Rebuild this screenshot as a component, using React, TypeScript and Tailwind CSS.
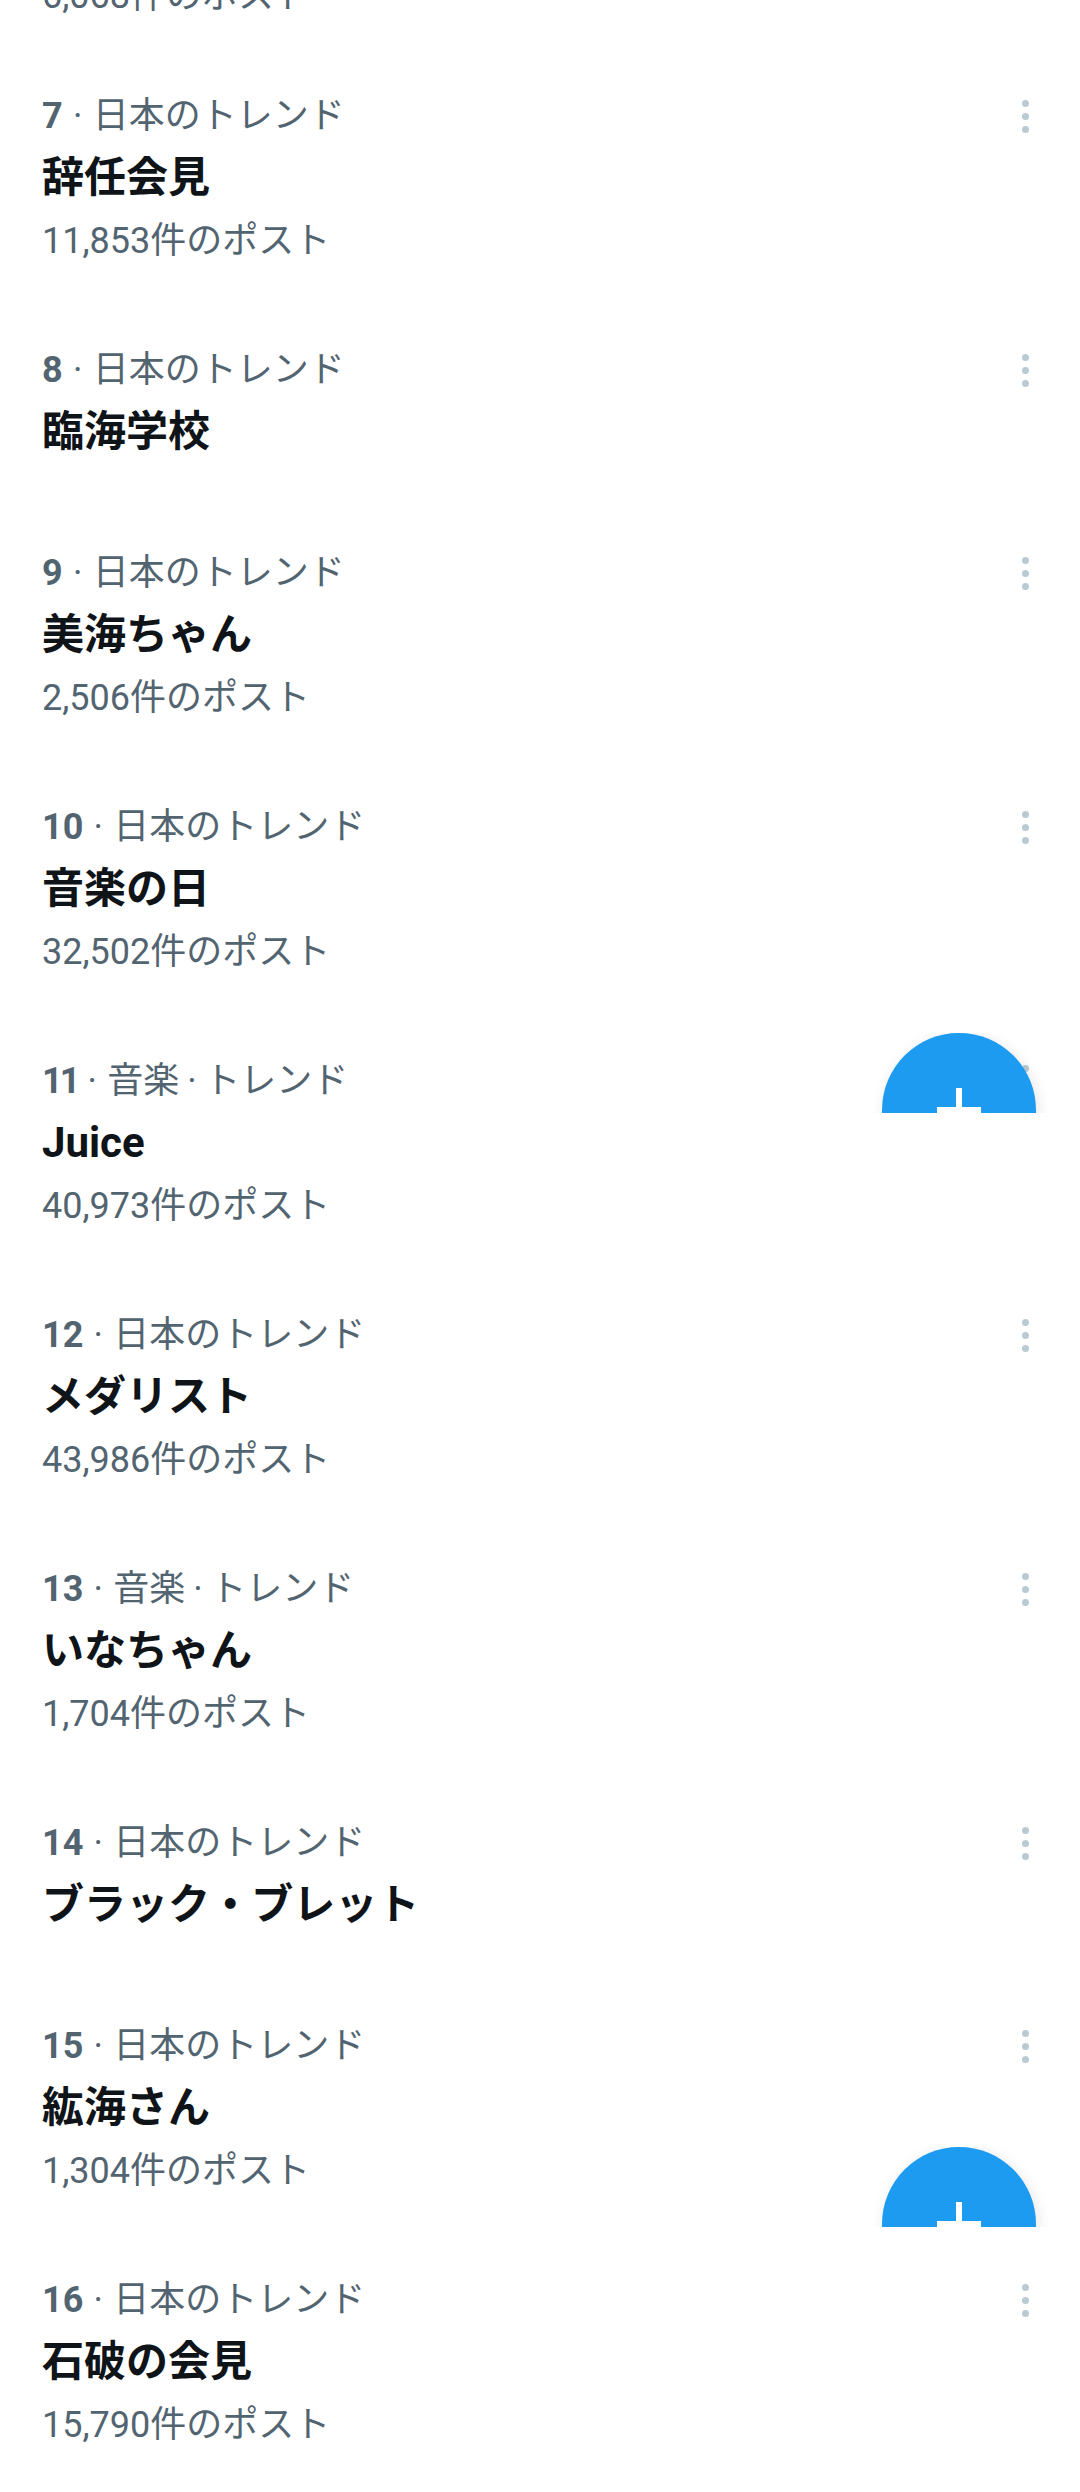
type Trend = {
  rank: number;
  category: string[];
  title: string;
  posts?: string;
};

const trends: Trend[] = [
  { rank: 7, category: ["日本のトレンド"], title: "辞任会見", posts: "11,853" },
  { rank: 8, category: ["日本のトレンド"], title: "臨海学校" },
  { rank: 9, category: ["日本のトレンド"], title: "美海ちゃん", posts: "2,506" },
  { rank: 10, category: ["日本のトレンド"], title: "音楽の日", posts: "32,502" },
  { rank: 11, category: ["音楽", "トレンド"], title: "Juice", posts: "40,973" },
  { rank: 12, category: ["日本のトレンド"], title: "メダリスト", posts: "43,986" },
  { rank: 13, category: ["音楽", "トレンド"], title: "いなちゃん", posts: "1,704" },
  { rank: 14, category: ["日本のトレンド"], title: "ブラック・ブレット" },
  { rank: 15, category: ["日本のトレンド"], title: "紘海さん", posts: "1,304" },
  { rank: 16, category: ["日本のトレンド"], title: "石破の会見", posts: "15,790" },
];

const font = { fontFamily: 'Roboto, "Noto Sans CJK JP", sans-serif' };

const MoreDots = () => (
  <div className="h-[48px] flex flex-col items-center justify-center gap-[6px]">
    <span className="size-[7px] rounded-full bg-[#b9cad3]" />
    <span className="size-[7px] rounded-full bg-[#b9cad3]" />
    <span className="size-[7px] rounded-full bg-[#b9cad3]" />
  </div>
);

const TrendRow = ({ trend }: { trend: Trend }) => (
  <div className={`flex pl-[42px] pr-[51px] pt-[31px] ${trend.posts ? "pb-[50px]" : "pb-[60px]"}`}>
    <div className="flex-1 min-w-0">
      <div className="h-[48px] leading-[48px] text-[36px] text-[#536471] whitespace-nowrap">
        <span className={`font-bold ${trend.rank === 11 ? "tracking-[-3px]" : ""}`}>{trend.rank}</span>
        {trend.category.map((c, i) => (
          <span key={c}>
            <span className={`inline-block text-center ${i === 0 ? "w-[30px]" : "w-[25px]"}`}>·</span>
            {c}
          </span>
        ))}
      </div>
      <div className="mt-[12px] h-[52px] leading-[52px] text-[42px] font-bold text-[#0f1419] whitespace-nowrap">
        {trend.title}
      </div>
      {trend.posts && (
        <div className="mt-[13px] h-[48px] leading-[48px] text-[36px] text-[#536471] whitespace-nowrap">
          {trend.posts}件のポスト
        </div>
      )}
    </div>
    <div className="w-[7px]">
      <MoreDots />
    </div>
  </div>
);

// FAB captured mid-scroll, cut off by the screenshot stitching
const Fab = ({ top }: { top: string }) => (
  <div className={`absolute left-[872px] ${top} w-[200px] h-[80px] overflow-hidden`}>
    <div className="absolute left-[10px] top-0 size-[154px] rounded-full bg-[#1d9bf0] shadow-[2px_2px_14px_rgba(0,0,0,0.1)] flex items-center justify-center">
      <svg width="44" height="44" viewBox="0 0 44 44">
        <rect x="0" y="19" width="44" height="6" fill="#fff" />
        <rect x="19" y="0" width="6" height="44" fill="#fff" />
      </svg>
    </div>
  </div>
);

export default function App() {
  return (
    <div className="relative w-[1080px] h-[2492px] overflow-hidden bg-white" style={font}>
      <div className="-mt-[28px] mb-[41px] h-[48px] leading-[48px] pl-[42px] text-[36px] text-[#536471]">
        6,068件のポスト
      </div>
      {trends.map((t) => (
        <TrendRow key={t.rank} trend={t} />
      ))}
      <Fab top="top-[1033px]" />
      <Fab top="top-[2147px]" />
    </div>
  );
}
